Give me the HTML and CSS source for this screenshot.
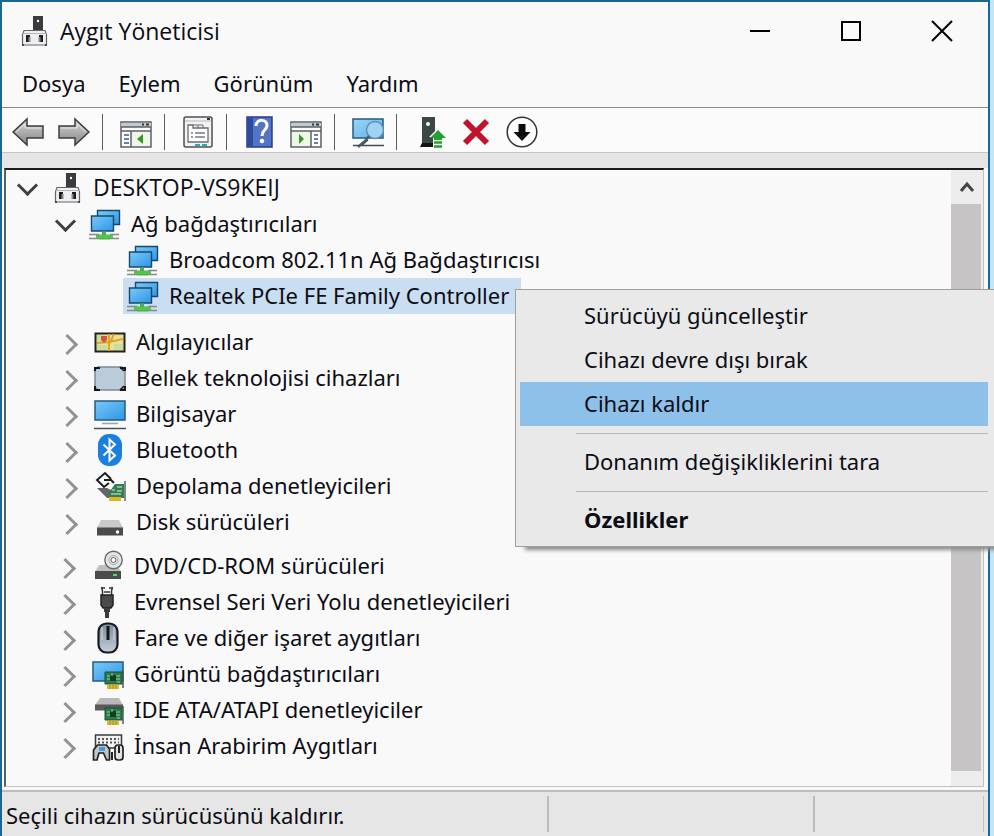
FILE: index.html
```html
<!DOCTYPE html>
<html lang="tr">
<head>
	<meta charset="UTF-8">
	<title>Aygıt Yöneticisi</title>
	<link rel="stylesheet" href="styles.css">
</head>
<body>
	<!-- shared icons -->
	<svg class="defs" aria-hidden="true">
		<defs>
			<linearGradient id="screen" x1="0" y1="0" x2="1" y2="1">
				<stop offset="0" stop-color="#7cc8f8"/>
				<stop offset="1" stop-color="#2b97e6"/>
			</linearGradient>
			<linearGradient id="lcd" x1="0" y1="0" x2="1" y2="1">
				<stop offset="0" stop-color="#9bd4f5"/>
				<stop offset="1" stop-color="#5fb4e6"/>
			</linearGradient>
			<linearGradient id="metal" x1="0" y1="0" x2="0" y2="1">
				<stop offset="0" stop-color="#d6d6d6"/>
				<stop offset="1" stop-color="#858585"/>
			</linearGradient>
			<linearGradient id="mouse" x1="0" y1="0" x2="0" y2="1">
				<stop offset="0" stop-color="#7d8b9b"/>
				<stop offset="1" stop-color="#c3ced9"/>
			</linearGradient>
			<symbol id="i-device" viewBox="0 0 32 32">
				<path d="M15 1h10v15H15z" fill="#3b3b3e"/>
				<circle cx="20" cy="6" r="1.200" fill="#fff"/>
				<path d="M6 15.500h21l1.500 4v10.500h-24v-10.500z" fill="#efeff1" stroke="#66666a" stroke-width="1.200"/>
				<path d="M4.500 18.500h24" stroke="#b5b5b8"/>
				<path d="M8 20h4v7h-4zM21 20h4v7h-4z" fill="#1e1e20"/>
				<path d="M10.500 22h2v5h-2zM20.500 22h2v5h-2z" fill="#88888c"/>
				<path d="M4 29h2v2H4zM27 29h2v2h-2z" fill="#4a4a4d"/>
			</symbol>
			<symbol id="i-net" viewBox="0 0 32 32">
				<path d="M8.500 2.500h22v14h-22z" fill="url(#screen)" stroke="#17496f" stroke-width="1.400"/>
				<path d="M2.500 8h22v15h-22z" fill="url(#screen)" stroke="#17496f" stroke-width="1.400"/>
				<path d="M13 23.500h4v3h4v5H10v-5h3z" fill="#4caf50"/>
				<path d="M0 26.500h10M21 26.500h9M0 30.500h10M21 30.500h9" stroke="#7f8d84" stroke-width="1.300"/>
				<path d="M7 28.500h17" stroke="#57c24c" stroke-width="3"/>
			</symbol>
			<symbol id="i-card" viewBox="0 0 20 20">
				<path d="M1 2h17v12H1z" fill="#2d7b4d" stroke="#17522f"/>
				<path d="M19 0v18" stroke="#4b5a50" stroke-width="1.500"/>
				<path d="M3 15h12v4H3z" fill="#e6b91e"/>
				<path d="M6 15v4M9 15v4M12 15v4" stroke="#b18a0d"/>
				<path d="M6 5h6v6H6z" fill="#153c25"/>
				<path d="M3 6h3M3 9h3M12 6h4M12 9h4M8 3v3M13 12h3" stroke="#95d89f"/>
			</symbol>
		</defs>
	</svg>

	<div class="window">
		<div class="titlebar">
			<svg class="icon" viewBox="0 0 32 32"><use href="#i-device"/></svg>
			<h1>Aygıt Yöneticisi</h1>
			<div class="controls">
				<button title="Simge durumuna küçült"><svg width="22" height="22"><path d="M1 11h20" stroke="#000" stroke-width="2"/></svg></button>
				<button title="Ekranı kapla"><svg width="22" height="22"><path d="M2 2h18v18H2z" fill="none" stroke="#000" stroke-width="2"/></svg></button>
				<button title="Kapat"><svg width="22" height="22"><path d="M1 1l20 20M21 1L1 21" stroke="#000" stroke-width="2"/></svg></button>
			</div>
		</div>

		<div class="menubar">
			<button>Dosya</button>
			<button>Eylem</button>
			<button>Görünüm</button>
			<button>Yardım</button>
		</div>

		<div class="toolbar">
			<button title="Geri">
				<svg viewBox="0 0 32 32"><path d="M1 16L15 3v7h16v12H15v7z" fill="url(#metal)" stroke="#3c3c3c" stroke-width="1.500"/><path d="M4 16l9-8v4h16" fill="none" stroke="#e8e8e8"/></svg>
			</button>
			<button title="İleri">
				<svg viewBox="0 0 32 32"><path d="M31 16L17 3v7H1v12h16v7z" fill="url(#metal)" stroke="#3c3c3c" stroke-width="1.500"/><path d="M28 16l-9-8v4H3" fill="none" stroke="#e8e8e8"/></svg>
			</button>
			<span class="sep"></span>
			<button title="Konsol ağacını göster">
				<svg viewBox="0 0 32 32"><path d="M1 6h30v25H1z" fill="#fdfdfd" stroke="#5b5f64" stroke-width="1.500"/><path d="M1 7h30v4H1z" fill="#c4c7cb"/><path d="M1 11h30M1 15h30M11 15v16" stroke="#5b5f64" stroke-width="1.500"/><path d="M22 8.500h2M26 8.500h3" stroke="#333" stroke-width="2"/><path d="M4 19h5M4 23h5M4 27h5" stroke="#3a5799" stroke-width="1.500"/><path d="M12 16h18v14H12z" fill="#eef7e7"/><path d="M23 18v10l-6-5z" fill="#37972b"/></svg>
			</button>
			<span class="sep"></span>
			<button title="Özellikler">
				<svg viewBox="0 0 32 32"><rect x="2" y="1" width="28" height="30" rx="2" fill="#f2f2f3" stroke="#4d5054" stroke-width="1.500"/><path d="M3 5h26" stroke="#b9babd"/><path d="M25 3h3" stroke="#333" stroke-width="2"/><path d="M6 9h5v3h15v14H6z" fill="#fff" stroke="#6a6d72" stroke-width="1.300"/><path d="M11 9h5v3M16 9h5v3" fill="none" stroke="#6a6d72"/><path d="M9 17h2M13 17h10M9 21h2M13 21h10" stroke="#777b80" stroke-width="1.500"/><path d="M13 29h5M20 29h5" stroke="#2ea6b5" stroke-width="2"/></svg>
			</button>
			<span class="sep"></span>
			<button title="Yardım">
				<svg viewBox="0 0 32 32"><path d="M3 1h25v30H3z" fill="#5474c8" stroke="#253d84" stroke-width="1.500"/><path d="M3 1h6v30H3z" fill="#2e4c9e"/><path d="M12 10c0-8 12-7 11 0-.5 4-5 4-5 10" fill="none" stroke="#fff" stroke-width="3"/><circle cx="18" cy="25" r="2.300" fill="#fff"/></svg>
			</button>
			<button title="Eylem bölmesini göster">
				<svg viewBox="0 0 32 32"><path d="M1 6h30v25H1z" fill="#fdfdfd" stroke="#5b5f64" stroke-width="1.500"/><path d="M1 7h30v4H1z" fill="#c4c7cb"/><path d="M1 11h30M1 15h30M21 15v16" stroke="#5b5f64" stroke-width="1.500"/><path d="M22 8.500h2M26 8.500h3" stroke="#333" stroke-width="2"/><path d="M24 19h4M24 23h4M24 27h4" stroke="#3a5799" stroke-width="1.500"/><path d="M2 16h18v14H2z" fill="#eef7e7"/><path d="M9 18v10l5-5z" fill="#37972b"/></svg>
			</button>
			<span class="sep"></span>
			<button title="Donanım değişikliklerini tara">
				<svg viewBox="0 0 32 32"><path d="M1 3h30v19H1z" fill="url(#lcd)" stroke="#26597f" stroke-width="1.500"/><path d="M1 29.500h31M10 29l6-5" stroke="#414b55" stroke-width="1.500"/><circle cx="23" cy="14" r="8.500" fill="#9ed3f2" stroke="#5f8eb0" stroke-width="1.500"/><path d="M17 20l-4 5-7 6" fill="none" stroke="#485b69" stroke-width="2.500"/></svg>
			</button>
			<span class="sep"></span>
			<button title="Sürücüyü güncelleştir">
				<svg viewBox="0 0 32 32"><path d="M8 1h13v26H8z" fill="#3d4743"/><circle cx="14" cy="8" r="2" fill="#e9fff3"/><path d="M8 27h13v4H6z" fill="#151515"/><path d="M24 12l9 9h-4v11H19V21h-4z" fill="#fff"/><path d="M24 14l8 8h-4v2h-8v-2h-4z" fill="#23a02e"/><path d="M20 26.500h8M20 30.500h8" stroke="#23a02e" stroke-width="2.500"/></svg>
			</button>
			<button title="Cihazı kaldır">
				<svg viewBox="0 0 32 32"><path d="M5 5l22 22M27 5L5 27" stroke="#c2132c" stroke-width="6"/></svg>
			</button>
			<button title="Cihazı devre dışı bırak">
				<svg viewBox="0 0 32 32"><circle cx="16" cy="16" r="14.800" fill="#fff" stroke="#333" stroke-width="1.500"/><path d="M12.500 8h7v8h5L16 25l-8.500-9h5z" fill="#0c0c0c"/></svg>
			</button>
		</div>
		<div class="band"></div>

		<div class="main">
			<ul class="tree">
				<li class="root">
					<div class="row">
						<button class="toggle open" title="Daralt"></button>
						<svg class="icon" viewBox="0 0 32 32"><use href="#i-device"/></svg>
						<span>DESKTOP-VS9KEIJ</span>
					</div>
					<ul>
						<li>
							<div class="row level1">
								<button class="toggle open" title="Daralt"></button>
								<svg class="icon" viewBox="0 0 32 32"><use href="#i-net"/></svg>
								<span>Ağ bağdaştırıcıları</span>
							</div>
							<ul class="children">
								<li class="row">
									<svg class="icon" viewBox="0 0 32 32"><use href="#i-net"/></svg>
									<span>Broadcom 802.11n Ağ Bağdaştırıcısı</span>
								</li>
								<li class="row selected">
									<svg class="icon" viewBox="0 0 32 32"><use href="#i-net"/></svg>
									<span>Realtek PCIe FE Family Controller</span>
								</li>
							</ul>
						</li>
					</ul>
					<ul class="group">
						<li class="row">
							<button class="toggle" title="Genişlet"></button>
							<svg class="icon" viewBox="0 0 32 32"><path d="M1.500 7.500h29v18h-29z" fill="#eadf9b" stroke="#222" stroke-width="2"/><path d="M3 9h9v6H3zM3 19h10v5H3zM20 18h9v6h-9z" fill="#c5dfa0"/><path d="M3 17l12-1 14-3M15 8v17M20 8l-4 9" fill="none" stroke="#d9a820" stroke-width="2"/><path d="M7 10h6v4l-3 3-3-3z" fill="#d9513f"/></svg>
							<span>Algılayıcılar</span>
						</li>
						<li class="row">
							<button class="toggle" title="Genişlet"></button>
							<svg class="icon" viewBox="0 0 32 32"><path d="M4 5h24l3 3v17l-3 3H4l-3-3V8z" fill="#bccbd9" stroke="#7c8995" stroke-width="1.500"/><path d="M1 9V6h5M26 6h5v3M31 24v4h-5M6 28H1v-4" fill="none" stroke="#15181b" stroke-width="2"/><path d="M26 5l4 4M26 28l4-4" fill="none" stroke="#15181b" stroke-width="1.500"/></svg>
							<span>Bellek teknolojisi cihazları</span>
						</li>
						<li class="row">
							<button class="toggle" title="Genişlet"></button>
							<svg class="icon" viewBox="0 0 32 32"><path d="M1 3h30v19H1z" fill="url(#screen)" stroke="#26597f" stroke-width="1.500"/><path d="M8 25.500h16" stroke="#9aa6ae" stroke-width="1.500"/><path d="M0 30.500h32" stroke="#4a4f53" stroke-width="1.500"/></svg>
							<span>Bilgisayar</span>
						</li>
						<li class="row">
							<button class="toggle" title="Genişlet"></button>
							<svg class="icon" viewBox="0 0 32 32"><rect x="4" y="0" width="24" height="32" rx="11" fill="#1b7fe0"/><path d="M9.500 10.500L21 21.500l-5.500 5v-21l5.500 5L9.500 21.500" fill="none" stroke="#fff" stroke-width="2"/></svg>
							<span>Bluetooth</span>
						</li>
						<li class="row">
							<button class="toggle" title="Genişlet"></button>
							<svg class="icon" viewBox="0 0 32 32"><path d="M3 18h10l8 4v6H13z" fill="#63676a"/><path d="M14 24l7-10h9v14H16z" fill="#347c54"/><path d="M31 11v20" stroke="#59665d" stroke-width="1.500"/><path d="M15 27h12v4H15z" fill="#e0b71f"/><path d="M18 20h3M23 17h5M23 21h5M17 24h10" stroke="#a0d1a7" stroke-width="1.300"/><path d="M17 9l-6-6-8 7 7 7 5-4M10 10h7l3 3" fill="none" stroke="#1d1d1d" stroke-width="2"/></svg>
							<span>Depolama denetleyicileri</span>
						</li>
						<li class="row">
							<button class="toggle" title="Genişlet"></button>
							<svg class="icon" viewBox="0 0 32 32"><path d="M7 14h18l4 8H3z" fill="#c9c9c9"/><path d="M3 21.500h26v8H3z" fill="#4b4b4b"/><path d="M3 21.500h26" stroke="#888"/><circle cx="23.500" cy="26" r="1.700" fill="#fff"/></svg>
							<span>Disk sürücüleri</span>
						</li>
					</ul>
					<ul class="group last">
						<li class="row">
							<button class="toggle" title="Genişlet"></button>
							<svg class="icon" viewBox="0 0 32 32"><path d="M7 15h18l4 7H3z" fill="#bdbdbd"/><path d="M3 21h26v8H3z" fill="#4b4b4b"/><path d="M21 25h4" stroke="#55e05a" stroke-width="2"/><circle cx="21.500" cy="10" r="8.700" fill="#e2e4e6" stroke="#67696c" stroke-width="1.400"/><circle cx="21.500" cy="10" r="4.500" fill="none" stroke="#a6a8ab"/><circle cx="21.500" cy="10" r="2.500" fill="#fff" stroke="#67696c"/></svg>
							<span>DVD/CD-ROM sürücüleri</span>
						</li>
						<li class="row">
							<button class="toggle" title="Genişlet"></button>
							<svg class="icon" viewBox="0 0 32 32"><path d="M10.500 9V5l-1-4M19.500 9V5l1-4M10 2h3M17 2h3M12 6h6" fill="none" stroke="#333" stroke-width="1.500"/><path d="M9 9h12v10l-2 3h-8l-2-3z" fill="#4a4a4c" stroke="#222" stroke-width="1.500"/><path d="M12 22h6v4h-1v6h-4v-6h-1z" fill="#3a3a3c"/></svg>
							<span>Evrensel Seri Veri Yolu denetleyicileri</span>
						</li>
						<li class="row">
							<button class="toggle" title="Genişlet"></button>
							<svg class="icon" viewBox="0 0 32 32"><rect x="6.500" y="1.500" width="19" height="29" rx="8" fill="url(#mouse)" stroke="#17191c" stroke-width="2.200"/><path d="M10 5v13M22 5v13" stroke="#c8d1da" stroke-width="1.300"/><path d="M16 4v14" stroke="#15171b" stroke-width="3"/></svg>
							<span>Fare ve diğer işaret aygıtları</span>
						</li>
						<li class="row">
							<button class="toggle" title="Genişlet"></button>
							<svg class="icon" viewBox="0 0 32 32"><path d="M1 4h30v19H1z" fill="url(#screen)" stroke="#26597f" stroke-width="1.500"/><use href="#i-card" x="12" y="12" width="20" height="20"/></svg>
							<span>Görüntü bağdaştırıcıları</span>
						</li>
						<li class="row">
							<button class="toggle" title="Genişlet"></button>
							<svg class="icon" viewBox="0 0 32 32"><path d="M8 4h19l4 7H3z" fill="#b9b9b9"/><path d="M3 10.500h28v6H3z" fill="#57595a"/><use href="#i-card" x="12" y="12" width="20" height="20"/></svg>
							<span>IDE ATA/ATAPI denetleyiciler</span>
						</li>
						<li class="row">
							<button class="toggle" title="Genişlet"></button>
							<svg class="icon" viewBox="0 0 32 32"><path d="M3.500 5h26v13h-26z" fill="#f2f2f2" stroke="#3c3c3c" stroke-width="1.500"/><path d="M6 9h21M6 12.500h21" stroke="#565656" stroke-width="1.800" stroke-dasharray="2 2"/><path d="M1.500 30V20l4-5h9l3 4v11h-3l-3-7H7l-2 7z" fill="#c3c6c9" stroke="#222" stroke-width="1.700"/><path d="M7 17h6v4H7z" fill="#3e9cd8"/><rect x="23" y="15" width="8" height="15" rx="3" fill="#e2e2e2" stroke="#222" stroke-width="1.700"/><path d="M27 16v7M20 22v8" stroke="#222" stroke-width="2"/></svg>
							<span>İnsan Arabirim Aygıtları</span>
						</li>
					</ul>
				</li>
			</ul>

			<div class="scrollbar">
				<button class="up" title="Yukarı"><svg width="16" height="14"><path d="M2 11l6-7 6 7" fill="none" stroke="#454545" stroke-width="3"/></svg></button>
				<div class="thumb"></div>
			</div>
		</div>

		<div class="statusbar">
			<span>Seçili cihazın sürücüsünü kaldırır.</span>
			<span></span>
			<span></span>
		</div>
	</div>

	<div class="context">
		<button>Sürücüyü güncelleştir</button>
		<button>Cihazı devre dışı bırak</button>
		<button class="active">Cihazı kaldır</button>
		<hr>
		<button>Donanım değişikliklerini tara</button>
		<hr>
		<button class="default">Özellikler</button>
	</div>
</body>
</html>
```
FILE: styles.css
```css
* {
	box-sizing: border-box;
}
body, ul, h1 {
	margin: 0;
	padding: 0;
}
body {
	position: relative;
	display: flex;
	min-height: 100vh;
	padding-right: 4px;
	overflow-x: hidden;
	background: #c3e6f6;
	color: #0c0c14;
	font: 22px/34px "Noto Sans", "Open Sans", sans-serif;
}
ul {
	list-style: none;
}
button {
	padding: 0;
	border: 0;
	background: none;
	color: inherit;
	font: inherit;
}
svg {
	display: block;
}
.defs {
	position: absolute;
	width: 0;
	height: 0;
}
.icon {
	flex: none;
	width: 32px;
	height: 32px;
}

.window {
	flex: 1;
	display: flex;
	flex-direction: column;
	min-width: 0;
	border: 2px solid #1b6595;
	border-bottom: 0;
	background: #f9f9f9;
}

/* title bar */
.titlebar {
	display: flex;
	align-items: center;
	height: 58px;
	padding-left: 16px;
}
.titlebar h1 {
	flex: 1;
	margin-left: 10px;
	font: 23px/34px "Open Sans", sans-serif;
}
.controls {
	display: flex;
	padding-right: 1px;
}
.controls button {
	display: flex;
	align-items: center;
	justify-content: center;
	width: 91px;
	height: 58px;
}

.menubar {
	display: flex;
	gap: 33px;
	height: 48px;
	padding: 5px 20px 7px;
	border-bottom: 1px solid #8a8a8a;
}

/* toolbar */
.toolbar {
	display: flex;
	align-items: center;
	gap: 14px;
	height: 45px;
	padding: 3px 0 0 10px;
	border-bottom: 1px solid #c6c6c6;
	background: #fbfbfb;
}
.toolbar button {
	flex: none;
	width: 32px;
	height: 32px;
}
.toolbar .sep {
	width: 2px;
	height: 36px;
	border-left: 1px solid #5c5c5c;
	margin: 0 2px 0 -2px;
}
.band {
	height: 15px;
	background: #e6e6e6;
}

/* device tree */
.main {
	flex: 1;
	display: flex;
	margin: 0 4px 3px 2px;
	border: 1px solid #c3c0c3;
	border-top: 2px solid #1c1c1c;
	border-left: 2px solid #4e6270;
	background: #f9f9f9;
}
.tree {
	flex: 1;
}
.row {
	display: flex;
	align-items: center;
	height: 36px;
	white-space: nowrap;
}
.row span {
	margin-left: 10px;
	padding-bottom: 2px;
}
.toggle {
	display: flex;
	justify-content: center;
	align-items: center;
	width: 22px;
	height: 36px;
	margin-right: 13px;
	padding: 4px 6px 0 0;
}
.toggle:before {
	content: "";
	flex: none;
	width: 12px;
	height: 12px;
	border: solid #929292;
	border-width: 3px 3px 0 0;
	transform: rotate(45deg);
}
.toggle.open {
	padding: 0;
}
.toggle.open:before {
	margin-bottom: 6px;
	border-color: #3e3e3e;
	transform: rotate(135deg);
}
.root > .row {
	padding-left: 10px;
	font: 23px/34px "Open Sans", sans-serif;
}
.level1 {
	padding-left: 48px;
}
.children .row {
	width: fit-content;
	margin-left: 117px;
	padding: 0 12px 0 4px;
}
.children .selected {
	background: #c9def1;
}
.group {
	margin-top: 10px;
	padding-left: 53px;
}
.group.last {
	margin-top: 8px;
	padding-left: 51px;
}

.scrollbar {
	display: flex;
	flex-direction: column;
	width: 32px;
	padding-bottom: 15px;
	background: #ededed;
}
.scrollbar .up {
	display: flex;
	align-items: center;
	justify-content: center;
	height: 34px;
}
.scrollbar .thumb {
	flex: 1;
	margin-right: 2px;
	background: #c6c4c4;
}

.statusbar {
	display: grid;
	grid-template-columns: 547fr 266fr 173fr;
	height: 46px;
	padding: 4px 0;
	border-top: 2px solid #bdbdbd;
	background: #e6e6e6;
}
.statusbar span {
	padding: 2px 0 0 4px;
	border-right: 2px solid #bcbcbc;
	white-space: nowrap;
}
.statusbar span:last-child {
	margin-right: 4px;
	border-right: 1px solid #c9bfc3;
}

/* right-click menu */
.context {
	position: absolute;
	top: 289px;
	left: 515px;
	right: 0;
	padding: 4px 6px 4px 4px;
	border: 1px solid #9f9f9f;
	border-right: 0;
	background: #e9e9e9;
	box-shadow: 8px 5px 4px -2px #8c8c8c;
}
.context button {
	display: block;
	width: 100%;
	height: 44px;
	padding: 0 0 2px 64px;
	text-align: left;
}
.context .active {
	background: #8dc1ea;
}
.context .default {
	font-weight: bold;
}
.context hr {
	height: 1px;
	margin: 7px 0 6px 56px;
	border: 0;
	background: #b7b7b7;
}
```
